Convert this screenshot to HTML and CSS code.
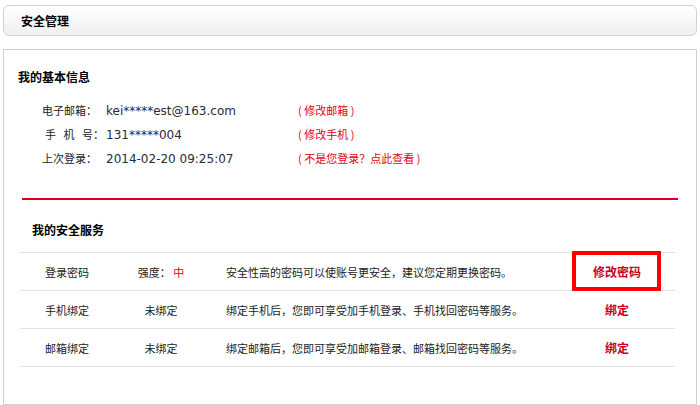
FILE: index.html
```html
<!DOCTYPE html>
<html lang="zh-CN">
<head>
    <meta charset="UTF-8">
    <title>安全管理</title>
    <link rel="stylesheet" href="styles.css">
</head>
<body>
    <div class="page">
        <div class="title-bar">
            <h2>安全管理</h2>
        </div>

        <div class="panel">
            <div class="basic">
                <h3>我的基本信息</h3>
                <ul class="info-list">
                    <li>
                        <span class="label">电子邮箱：</span>
                        <span class="value">kei*****est@163.com</span>
                        <a class="edit" href="#">( 修改邮箱 )</a>
                    </li>
                    <li>
                        <span class="label label-mobile"><span class="wide">手机</span>号：</span>
                        <span class="value">131*****004</span>
                        <a class="edit" href="#">( 修改手机 )</a>
                    </li>
                    <li>
                        <span class="label">上次登录：</span>
                        <span class="value">2014-02-20 09:25:07</span>
                        <a class="edit" href="#">( 不是您登录？点此查看 )</a>
                    </li>
                </ul>
            </div>

            <div class="divider"></div>

            <div class="service">
                <h3>我的安全服务</h3>
                <table class="service-table">
                    <tr>
                        <td class="col-name">登录密码</td>
                        <td class="col-state">强度： <span class="level">中</span></td>
                        <td class="col-desc">安全性高的密码可以使账号更安全，建议您定期更换密码。</td>
                        <td class="col-action">
                            <a class="action" href="#">修改密码</a>
                            <span class="highlight"></span>
                        </td>
                    </tr>
                    <tr>
                        <td class="col-name">手机绑定</td>
                        <td class="col-state">未绑定</td>
                        <td class="col-desc">绑定手机后，您即可享受加手机登录、手机找回密码等服务。</td>
                        <td class="col-action"><a class="action" href="#">绑定</a></td>
                    </tr>
                    <tr>
                        <td class="col-name">邮箱绑定</td>
                        <td class="col-state">未绑定</td>
                        <td class="col-desc">绑定邮箱后，您即可享受加邮箱登录、邮箱找回密码等服务。</td>
                        <td class="col-action"><a class="action" href="#">绑定</a></td>
                    </tr>
                </table>
            </div>
        </div>
    </div>
</body>
</html>
```

FILE: styles.css
```css
body {
    margin: 0;
    font-family: "DejaVu Sans", "Noto Sans CJK SC", sans-serif;
    font-size: 11px;
    color: #333;
    background-color: #fff;
}

.page {
    padding: 5px 3px 0;
}

.title-bar {
    height: 29px;
    padding-left: 17px;
    margin-bottom: 13px;
    border: 1px solid #d2d2d2;
    border-radius: 6px;
    background: linear-gradient(#fff, #efefef);
}

.title-bar h2 {
    margin: 0;
    font-family: "Noto Sans CJK SC", sans-serif;
    font-size: 12px;
    line-height: 29px;
    color: #000;
}

.panel {
    height: 354px;
    border: 1px solid #cfcfcf;
}

h3 {
    margin: 0;
    font-family: "Noto Sans CJK SC", sans-serif;
    font-size: 12px;
    line-height: 20px;
    color: #000;
}

.basic {
    padding: 17px 0 0 14px;
}

.info-list {
    list-style: none;
    margin: 11px 0 0 24px;
    padding: 0;
}

.info-list li {
    display: flex;
    align-items: baseline;
    height: 24px;
    line-height: 24px;
}

.label {
    width: 64px;
    font-family: "Noto Sans CJK SC", sans-serif;
    color: #222;
}

.label-mobile {
    padding-left: 3px;
    width: 61px;
}

.wide {
    letter-spacing: 7.5px;
}

.value {
    width: 192px;
    font-size: 12px;
    color: #2a2a3a;
}

.edit {
    font-family: "Noto Sans CJK SC", sans-serif;
    color: #e60012;
    text-decoration: none;
}

.divider {
    height: 2px;
    margin: 28px 18px 0;
    background-color: #d9001b;
}

.service {
    padding: 20px 21px 0 16px;
}

.service h3 {
    padding-left: 12px;
}

.service-table {
    width: 100%;
    margin-top: 12px;
    border-collapse: collapse;
    font-family: "Noto Sans CJK SC", sans-serif;
}

.service-table td {
    height: 37px;
    padding: 0;
    border-top: 1px solid #e3e3e3;
    border-bottom: 1px solid #e3e3e3;
    color: #222;
}

.col-name,
.col-state {
    width: 94px;
    text-align: center;
}

.col-desc {
    padding-left: 18px !important;
}

.col-action {
    position: relative;
    width: 116px;
    text-align: center;
}

.level {
    color: #e60012;
}

.action {
    font-size: 12px;
    font-weight: bold;
    color: #c8001e;
    text-decoration: none;
}

.highlight {
    position: absolute;
    left: 13px;
    top: -2px;
    width: 81px;
    height: 32px;
    border: 4px solid #f00;
}
```
